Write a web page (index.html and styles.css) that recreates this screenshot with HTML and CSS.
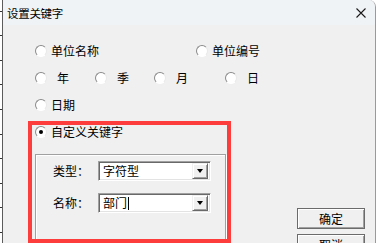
FILE: index.html
```html
<!DOCTYPE html>
<html lang="zh-CN">
<head>
    <meta charset="UTF-8" />
    <title>设置关键字</title>
    <link rel="stylesheet" href="styles.css">
</head>
<body>
    <div class="desk">
        <div class="ticks"></div>
        <div class="window">
            <div class="titlebar">
                <span class="title">设置关键字</span>
                <svg class="close" width="10" height="10" viewBox="0 0 10 10">
                    <path d="M0.5 0.5L9.5 9.5M9.5 0.5L0.5 9.5" stroke="#1a1a1a" stroke-width="1.1" fill="none"/>
                </svg>
            </div>
            <div class="client">
                <div class="main">
                    <div class="row">
                        <label class="opt w161"><span class="radio"></span>单位名称</label>
                        <label class="opt"><span class="radio"></span>单位编号</label>
                    </div>
                    <div class="row">
                        <label class="opt w60"><span class="radio"></span><span class="sp">年</span></label>
                        <label class="opt w59"><span class="radio"></span><span class="sp">季</span></label>
                        <label class="opt w71"><span class="radio"></span><span class="sp">月</span></label>
                        <label class="opt"><span class="radio"></span><span class="sp">日</span></label>
                    </div>
                    <div class="row">
                        <label class="opt"><span class="radio"></span>日期</label>
                    </div>
                    <div class="row">
                        <label class="opt"><span class="radio on"></span>自定义关键字</label>
                    </div>
                    <div class="group">
                        <div class="field">
                            <span class="lbl">类型：</span>
                            <div class="combo"><span class="val">字符型</span><span class="drop"></span></div>
                        </div>
                        <div class="field">
                            <span class="lbl">名称：</span>
                            <div class="combo"><span class="val">部门<i class="caret"></i></span><span class="drop"></span></div>
                        </div>
                    </div>
                </div>
                <div class="side">
                    <div class="btn">确定</div>
                    <div class="btn">取消</div>
                </div>
                <!-- 红框标注 -->
                <div class="mark"></div>
            </div>
        </div>
    </div>
</body>
</html>
```
FILE: styles.css
```css
*{margin:0;padding:0;box-sizing:border-box;}
body{background:#fff;font-family:"Noto Sans CJK SC","Liberation Sans",sans-serif;font-size:12px;color:#000;}
.desk{display:flex;height:243px;overflow:hidden;}
.ticks{width:2px;height:243px;background:repeating-linear-gradient(#fff 0,#fff 11px,#333 11px,#333 12px,#fff 12px,#fff 24.5px);}
.window{width:374px;height:243px;overflow:hidden;border-left:1px solid #5c5c5c;border-right:1px solid #9a9a9a;border-top-right-radius:7px;background:#f0f0f0;}
.titlebar{height:25px;display:flex;align-items:center;justify-content:space-between;background:#eff3f6;padding-left:4px;}
.title{font-size:11.5px;line-height:12px;letter-spacing:-0.3px;}
.close{margin-right:9px;}
.client{position:relative;display:flex;height:218px;}
.main{width:223px;flex:none;padding:12px 0 0 32px;}
.row{display:flex;align-items:center;height:27px;}
.opt{display:flex;align-items:center;flex:none;white-space:nowrap;line-height:12px;}
.w161{width:161px;}
.w60{width:60px;}
.w59{width:59px;}
.w71{width:71px;}
.sp{padding-left:6px;}
.radio{width:12px;height:12px;flex:none;margin-right:4px;border-radius:50%;background:#fff;border:1px solid;border-color:#8a8a8a #e8e8e8 #fff #8a8a8a;position:relative;}
.radio.on::after{content:"";position:absolute;left:3px;top:3px;width:4px;height:4px;border-radius:50%;background:#000;}
.group{margin-top:9px;width:191px;height:100px;border:1px solid #a0a0a0;box-shadow:1px 1px 0 #fff,inset 1px 1px 0 #fff;padding:6px 0 0 17px;}
.field{display:flex;align-items:center;height:20px;margin-bottom:12px;}
.lbl{width:45px;flex:none;line-height:12px;}
.combo{width:113px;height:20px;flex:none;background:#fff;display:flex;align-items:center;justify-content:space-between;border:1px solid;border-color:#a0a0a0 #fff #fff #a0a0a0;box-shadow:inset 1px 1px 0 #696969,inset -1px -1px 0 #e3e3e3;padding:2px;}
.val{padding-left:2px;line-height:12px;display:flex;align-items:center;}
.caret{display:inline-block;width:1px;height:13px;background:#000;margin-left:1px;}
.drop{width:16px;height:16px;background:#f0f0f0;border:1px solid;border-color:#f0f0f0 #696969 #696969 #f0f0f0;box-shadow:inset 1px 1px 0 #fff,inset -1px -1px 0 #a0a0a0;position:relative;}
.drop::after{content:"";position:absolute;left:4px;top:5px;border-left:3px solid transparent;border-right:3px solid transparent;border-top:4px solid #000;}
.side{margin-left:71px;padding-top:183px;display:flex;flex-direction:column;gap:5px;}
.btn{width:68px;height:21px;flex:none;display:flex;align-items:center;justify-content:center;line-height:12px;background:#f0f0f0;border:1px solid #6b6b6b;box-shadow:inset 1px 1px 0 #fff,inset -1px -1px 0 #a0a0a0;}
.mark{position:absolute;left:25px;top:96px;width:203px;height:122px;border:4px solid #fd3c3c;}
```
